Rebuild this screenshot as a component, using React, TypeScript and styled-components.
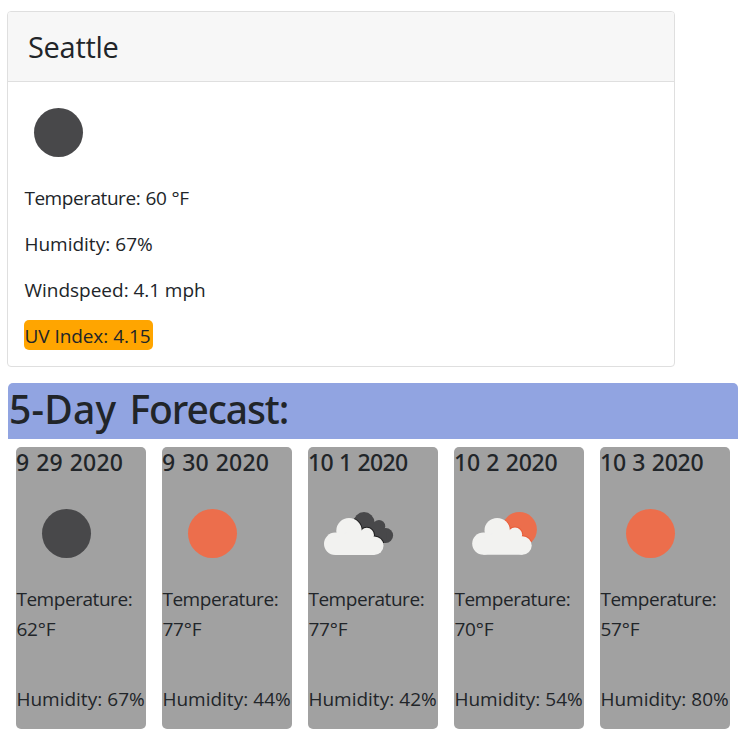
import React from "react";
import styled, { createGlobalStyle } from "styled-components";

const GlobalStyle = createGlobalStyle`
  *, *::before, *::after { box-sizing: border-box; }
  body {
    margin: 0;
    background: #fff;
    color: #212529;
    font-family: "Segoe UI", "Open Sans", "Noto Sans", sans-serif;
    font-size: 19px;
    font-weight: 400;
    line-height: 30px;
  }
  h1, h2, h3, p { margin: 0; }
`;

const Page = styled.main`
  width: 731px;
  margin-left: 7px;
  padding-top: 11px;
`;

const CurrentCard = styled.section`
  width: 668px;
  height: 356px;
  border: 1px solid #dfdfdf;
  border-radius: 4px;
  overflow: hidden;
`;

const CardHeader = styled.header`
  height: 70px;
  padding: 17px 20px 0;
  background: #f7f7f7;
  border-bottom: 1px solid #dfdfdf;
`;

const City = styled.h2`
  font-size: 29px;
  font-weight: 400;
  line-height: 36px;
  letter-spacing: -0.3px;
`;

const CardBody = styled.div`
  display: flex;
  flex-direction: column;
  align-items: flex-start;
  gap: 16px;
  padding: 0 16px;
`;

const Reading = styled.p<{ $tracking?: number; $gap?: number }>`
  height: 30px;
  padding-left: 0.4px;
  line-height: 32px;
  white-space: nowrap;
  letter-spacing: ${({ $tracking = 0 }) => $tracking}px;
  word-spacing: ${({ $gap = 0.2 }) => $gap}px;
`;

const UvReading = styled(Reading)`
  width: 129px;
  background: orange;
  border-radius: 5px;
`;

const CurrentIcon = styled.div`
  height: 84px;
  margin-left: -16px;
`;

const Banner = styled.header`
  height: 56px;
  margin: 16px 0 8px 1px;
  padding-left: 1px;
  background: #91a4e1;
  border-radius: 5px 5px 0 0;
`;

const BannerTitle = styled.h1`
  font-family: "Segoe UI", "Noto Sans", sans-serif;
  font-size: 39px;
  font-weight: 500;
  line-height: 52px;
  letter-spacing: 0.2px;
  word-spacing: 3px;
  white-space: nowrap;
`;

const TightWord = styled.span`
  letter-spacing: -1.1px;
`;

const Days = styled.div`
  display: grid;
  grid-template-columns: repeat(5, 130px);
  gap: 16px;
  margin-left: 9px;
`;

const Day = styled.article`
  height: 282px;
  background: #a1a1a1;
  border-radius: 5px;
`;

const DayTitle = styled.h3<{ $tracking: number }>`
  height: 36px;
  font-family: "Segoe UI", "Noto Sans", sans-serif;
  font-size: 23px;
  font-weight: 500;
  line-height: 31px;
  letter-spacing: ${({ $tracking }) => $tracking}px;
  word-spacing: 0.8px;
  white-space: nowrap;
`;

const DayTemperature = styled.div`
  display: flex;
  flex-direction: column;
  margin-bottom: 40px;
`;

const Icon = styled.svg`
  display: block;
  width: 100px;
  height: 100px;
`;

type Sky = "night" | "sun" | "clouds" | "sunClouds";

function CloudShape() {
  return (
    <>
      <circle cx="27.2" cy="60.8" r="11.2" />
      <circle cx="41" cy="47.8" r="12.7" />
      <circle cx="58.8" cy="52" r="7.2" />
      <circle cx="66.2" cy="62.7" r="9.3" />
      <path d="M27.2 72H66.2V58L59 48H41L27 56Z" />
    </>
  );
}

function DarkCloudShape() {
  return (
    <>
      <circle cx="56" cy="39.6" r="10.5" />
      <circle cx="71" cy="43.2" r="6.2" />
      <circle cx="77.7" cy="52.5" r="7.4" />
      <path d="M46 43L60 36L72 42L79 50L77.7 59.9H66L50 52Z" />
    </>
  );
}

function WeatherIcon({ sky }: { sky: Sky }) {
  return (
    <Icon viewBox="0 0 100 100" aria-hidden="true">
      {sky === "night" && <circle cx="50.5" cy="50.5" r="24.5" fill="#48484a" />}
      {sky === "sun" && <circle cx="50.5" cy="50.5" r="24.5" fill="#ec6e4c" />}
      {sky === "clouds" && (
        <>
          <clipPath id="dark-cloud">
            <DarkCloudShape />
          </clipPath>
          <g fill="#48484a">
            <DarkCloudShape />
          </g>
          <g clipPath="url(#dark-cloud)" fill="none" stroke="#202021" strokeWidth="2">
            <CloudShape />
          </g>
          <g fill="#f2f2f0">
            <CloudShape />
          </g>
        </>
      )}
      {sky === "sunClouds" && (
        <>
          <clipPath id="sun-disc">
            <circle cx="63" cy="46.7" r="17.5" />
          </clipPath>
          <circle cx="65.4" cy="46.5" r="17.5" fill="#ec6e4c" />
          <g transform="translate(2.2 -.2)">
            <g
              clipPath="url(#sun-disc)"
              fill="none"
              stroke="#e85c38"
              strokeWidth="2"
            >
              <CloudShape />
            </g>
            <g fill="#f2f2f0">
              <CloudShape />
            </g>
          </g>
        </>
      )}
    </Icon>
  );
}

const days: {
  date: string;
  tracking: number;
  sky: Sky;
  temperature: number;
  humidity: number;
}[] = [
  { date: "9 29 2020", tracking: 0.15, sky: "night", temperature: 62, humidity: 67 },
  { date: "9 30 2020", tracking: 0.15, sky: "sun", temperature: 77, humidity: 44 },
  { date: "10 1 2020", tracking: -0.7, sky: "clouds", temperature: 77, humidity: 42 },
  { date: "10 2 2020", tracking: -0.25, sky: "sunClouds", temperature: 70, humidity: 54 },
  { date: "10 3 2020", tracking: -0.25, sky: "sun", temperature: 57, humidity: 80 },
];

export default function App() {
  return (
    <>
      <GlobalStyle />
      <Page>
        <CurrentCard>
          <CardHeader>
            <City>Seattle</City>
          </CardHeader>
          <CardBody>
            <CurrentIcon>
              <WeatherIcon sky="night" />
            </CurrentIcon>
            <Reading $tracking={-0.45} $gap={0.8}>Temperature: 60 °F</Reading>
            <Reading>Humidity: 67%</Reading>
            <Reading $gap={-0.2}>Windspeed: 4.1 mph</Reading>
            <UvReading $tracking={-0.1} $gap={0.3}>UV Index: 4.15</UvReading>
          </CardBody>
        </CurrentCard>
        <Banner>
          <BannerTitle>
            5-Day <TightWord>Forecast:</TightWord>
          </BannerTitle>
        </Banner>
        <Days>
          {days.map((day) => (
            <Day key={day.date}>
              <DayTitle $tracking={day.tracking}>{day.date}</DayTitle>
              <WeatherIcon sky={day.sky} />
              <DayTemperature>
                <Reading $tracking={-0.45}>Temperature:</Reading>
                <Reading $tracking={-0.2}>{day.temperature}°F</Reading>
              </DayTemperature>
              <Reading>Humidity: {day.humidity}%</Reading>
            </Day>
          ))}
        </Days>
      </Page>
    </>
  );
}
